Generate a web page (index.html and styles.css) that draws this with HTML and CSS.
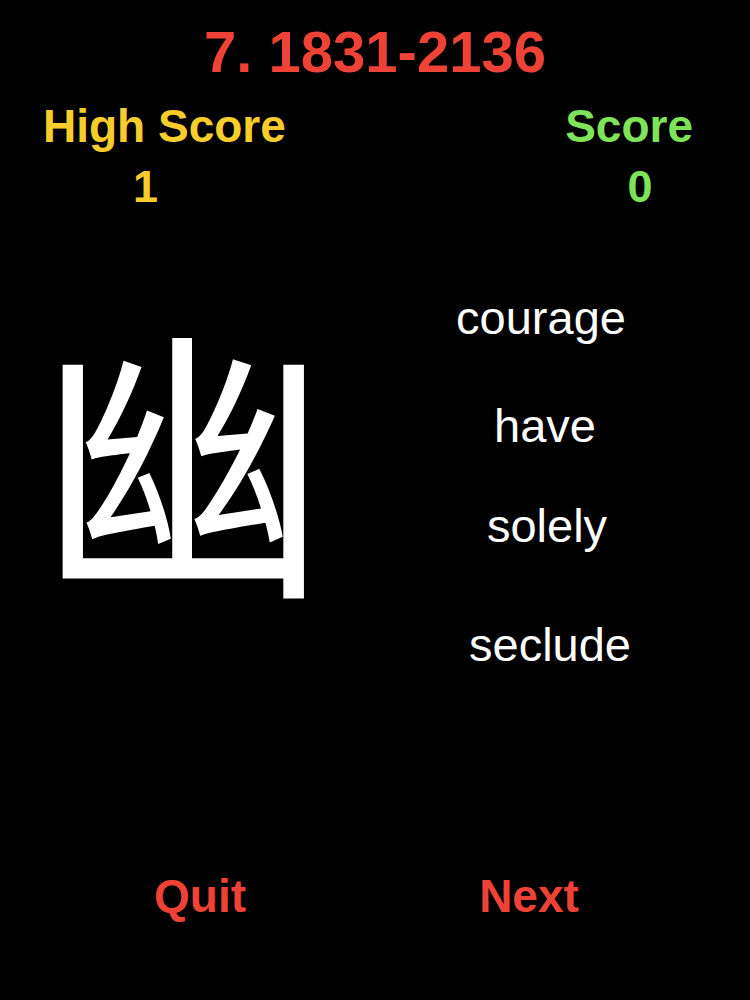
FILE: index.html
```html
<!DOCTYPE html>
<html lang="en">
<head>
<meta charset="utf-8">
<title>Quiz</title>
<link rel="stylesheet" href="styles.css">
</head>
<body>
<div class="app">
  <h1 class="title">7. 1831-2136</h1>
  <div class="scores">
    <div class="score-col high">
      <div class="label">High Score</div>
      <div class="value">1</div>
    </div>
    <div class="score-col current">
      <div class="label">Score</div>
      <div class="value">0</div>
    </div>
  </div>
  <div class="quiz">
    <div class="hanzi">幽</div>
    <div class="choices">
      <div class="choice c1">courage</div>
      <div class="choice c2">have</div>
      <div class="choice c3">solely</div>
      <div class="choice c4">seclude</div>
    </div>
  </div>
  <div class="actions">
    <div class="btn">Quit</div>
    <div class="btn">Next</div>
  </div>
</div>
</body>
</html>
```
FILE: styles.css
```css
html, body {
  margin: 0;
  padding: 0;
  background: #000;
}
.app {
  width: 750px;
  height: 1000px;
  background: #000;
  font-family: "Liberation Sans", Arial, sans-serif;
  display: flex;
  flex-direction: column;
}
.title {
  margin: 0;
  padding-top: 23px;
  font-size: 58px;
  line-height: 58px;
  font-weight: bold;
  color: #ee4236;
  text-align: center;
}
.scores {
  display: flex;
  justify-content: space-between;
  padding: 22px 57px 0 43px;
}
.score-col {
  display: flex;
  flex-direction: column;
  font-weight: bold;
}
.label {
  font-size: 46px;
  line-height: 46px;
}
.value {
  font-size: 45px;
  line-height: 45px;
  margin-top: 15px;
  text-align: center;
}
.high { color: #f6cd2b; }
.high .value { padding-right: 38px; }
.current { color: #7fe35a; }
.current .value { padding-left: 22px; }
.quiz {
  display: grid;
  grid-template-columns: 366px 358px;
  height: 664px;
}
.hanzi {
  font-family: "Noto Sans CJK SC", "Noto Sans CJK JP", sans-serif;
  font-size: 290px;
  line-height: 290px;
  color: #fff;
  text-align: center;
  padding-top: 97px;
}
.choices {
  display: grid;
  grid-template-rows: 108px 100px 119px 47px;
  padding-top: 85px;
  color: #fff;
  font-size: 47px;
  line-height: 47px;
  text-align: center;
}
.c1 { padding-right: 8px; }
.c3 { padding-left: 4px; }
.c4 { padding-left: 10px; }
.actions {
  display: grid;
  grid-template-columns: 400px 258px;
  font-size: 46px;
  line-height: 46px;
  font-weight: bold;
  color: #ee4236;
  text-align: center;
}
```
